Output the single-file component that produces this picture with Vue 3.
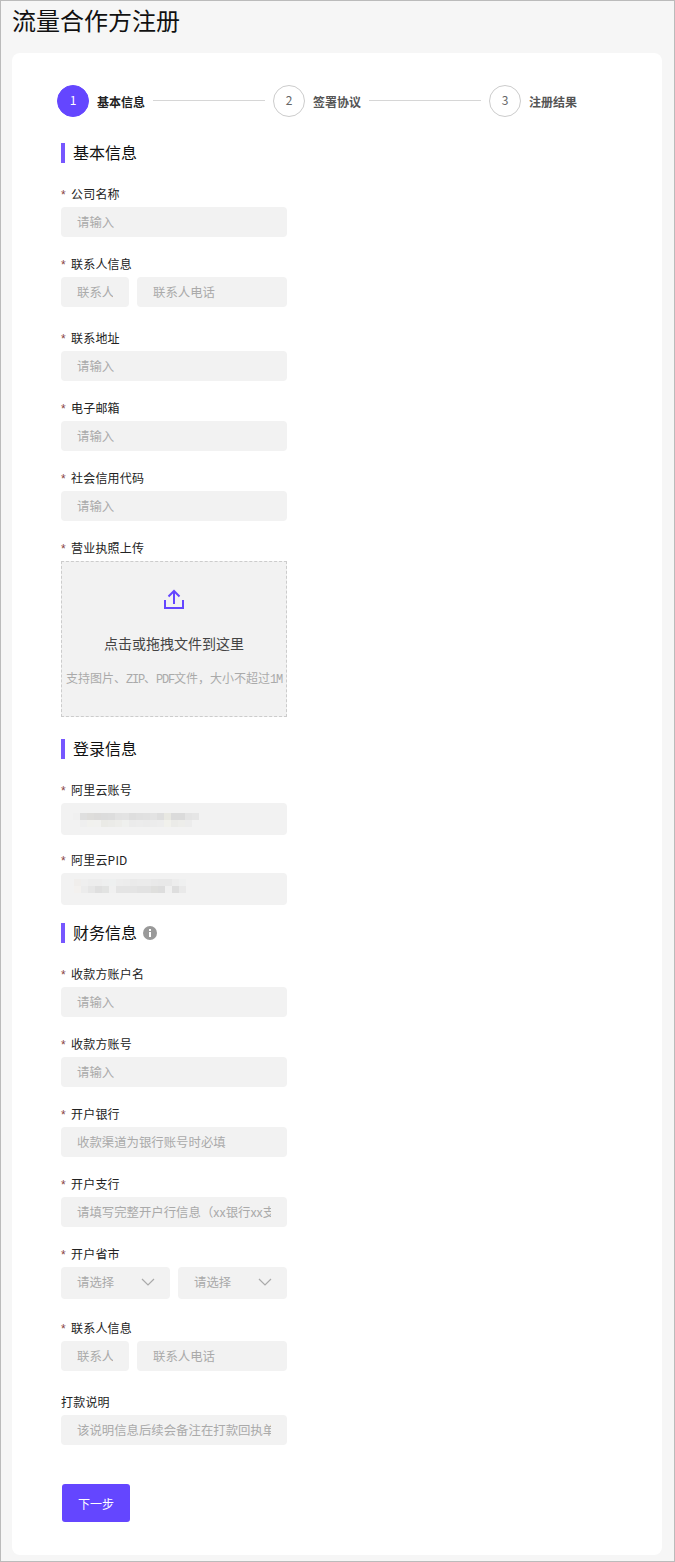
<template>
  <div class="page">
    <h1 class="title">流量合作方注册</h1>

    <div class="card">
      <!-- steps -->
      <div class="steps">
        <template v-for="(step, i) in steps" :key="step">
          <div v-if="i > 0" class="step-line"></div>
          <div class="step-num" :class="{ active: i === 0 }">{{ i + 1 }}</div>
          <div class="step-name" :class="{ active: i === 0 }">{{ step }}</div>
        </template>
      </div>

      <form class="form" @submit.prevent>
        <!-- 基本信息 -->
        <h2 class="section">基本信息</h2>
        <div class="field">
          <label class="label"><i>*</i>公司名称</label>
          <input class="input" placeholder="请输入" />
        </div>
        <div class="field loose">
          <label class="label"><i>*</i>联系人信息</label>
          <div class="pair">
            <input class="input short" placeholder="联系人" />
            <input class="input" placeholder="联系人电话" />
          </div>
        </div>
        <div class="field" v-for="name in basicFields" :key="name">
          <label class="label"><i>*</i>{{ name }}</label>
          <input class="input" placeholder="请输入" />
        </div>
        <div class="field upload-field">
          <label class="label"><i>*</i>营业执照上传</label>
          <div class="upload">
            <svg class="upload-icon" width="20" height="20" viewBox="0 0 20 20" fill="none">
              <path d="M1 11v8h18v-8M10 15V2M4.500 7.500L10 2l5.500 5.500" stroke="#6446ff" stroke-width="2" />
            </svg>
            <div class="upload-title">点击或拖拽文件到这里</div>
            <div class="upload-hint">支持图片、<span>ZIP</span>、<span>PDF</span>文件&#xFF0C;大小不超过<span>1M</span></div>
          </div>
        </div>

        <!-- 登录信息 -->
        <h2 class="section">登录信息</h2>
        <div class="field tall">
          <label class="label"><i>*</i>阿里云账号</label>
          <div class="masked">
            <div class="mosaic" :style="{ width: account[0].length * 7 + 'px' }">
              <span v-for="(c, i) in account.flat()" :key="i" :style="{ background: c }"></span>
            </div>
          </div>
        </div>
        <div class="field tall last-tall">
          <label class="label"><i>*</i>阿里云PID</label>
          <div class="masked pid">
            <div class="mosaic" :style="{ width: pid[0].length * 7 + 'px' }">
              <span v-for="(c, i) in pid.flat()" :key="i" :style="{ background: c }"></span>
            </div>
          </div>
        </div>

        <!-- 财务信息 -->
        <h2 class="section">
          财务信息
          <svg class="info" width="14" height="14" viewBox="0 0 14 14">
            <circle cx="7" cy="7" r="7" fill="#999" />
            <rect x="6" y="6" width="2" height="5" fill="#fff" />
            <rect x="6" y="3" width="2" height="2" fill="#fff" />
          </svg>
        </h2>
        <div class="field" v-for="f in financeFields" :key="f.name">
          <label class="label"><i>*</i>{{ f.name }}</label>
          <input class="input" :placeholder="f.hint" />
        </div>
        <div class="field selects">
          <label class="label"><i>*</i>开户省市</label>
          <div class="pair">
            <div class="select" v-for="n in 2" :key="n">
              <span>请选择</span>
              <svg width="14" height="8" viewBox="0 0 14 8" fill="none">
                <path d="M1 1l6 6 6-6" stroke="#aaa" stroke-width="1.200" />
              </svg>
            </div>
          </div>
        </div>
        <div class="field loose">
          <label class="label"><i>*</i>联系人信息</label>
          <div class="pair">
            <input class="input short" placeholder="联系人" />
            <input class="input" placeholder="联系人电话" />
          </div>
        </div>
        <div class="field">
          <label class="label">打款说明</label>
          <input class="input" placeholder="该说明信息后续会备注在打款回执单上" />
        </div>

        <button class="next" type="submit">下一步</button>
      </form>
    </div>
  </div>
</template>

<script setup>
const steps = ["基本信息", "签署协议", "注册结果"];
const basicFields = ["联系地址", "电子邮箱", "社会信用代码"];

const financeFields = [
  { name: "收款方账户名", hint: "请输入" },
  { name: "收款方账号", hint: "请输入" },
  { name: "开户银行", hint: "收款渠道为银行账号时必填" },
  { name: "开户支行", hint: "请填写完整开户行信息\uFF08xx银行xx支行\uFF09" },
];

// blurred-out account values
const account = [
  ["#f0f0f0", "#dfdfdf", "#dedddb", "#dcdbda", "#dcdcdc", "#dddddd", "#e2e2e2", "#e3e3e3", "#dedede", "#e0e0e0", "#e1e1e1", "#e3e3e3", "#dedede", "#e8e8e2", "#dbdbdb", "#dbdbdb", "#e4e4e4", "#e6e6e6"],
  ["#f2f2f2", "#efefef", "#f1f1ee", "#f1f1ef", "#eaeae6", "#ebebe8", "#ededea", "#eff0ee", "#ebebeb", "#ececec", "#ebebeb", "#ececec", "#ededed", "#f1f1ec", "#ebebe8", "#ededea", "#ececec", "#f2f2f2"],
];
const pid = [
  ["#f0eeec", "#efefef", "#ededed", "#ededed", "#eeefef", "#eef0f0", "#ededed", "#ececec", "#eaeaea", "#ebebeb", "#ebebeb", "#e9e9e9", "#e8e8e8", "#e8e8e8", "#ededed", "#eff0f0"],
  ["#f3f1ef", "#ececec", "#e6e6e6", "#dfdfdf", "#e2e3e2", "#f0f0f0", "#e4e4e4", "#e4e4e4", "#e4e4e4", "#e2e2e2", "#e2e2e2", "#dfdfdd", "#dddddd", "#f0f0f0", "#dedede", "#e9e9e9"],
];
</script>

<style>
html,
body {
  margin: 0;
  background: #f6f6f6;
}
</style>

<style scoped>
.page {
  box-sizing: border-box;
  min-height: 1562px;
  padding: 0 12px 6px 11px;
  border: 1px solid #bbb;
  background: #f6f6f6;
  font-family: "Noto Sans CJK SC", "Noto Sans", sans-serif;
  font-size: 12px;
  color: #222;
}

.title {
  box-sizing: border-box;
  height: 52px;
  margin: 0;
  font-size: 24px;
  line-height: 37px;
  font-weight: 400;
  color: #111;
}

.card {
  padding: 32px 45px 33px;
  border-radius: 8px;
  background: #fff;
}

/* steps */
.steps {
  display: flex;
  align-items: center;
  height: 32px;
}

.step-num {
  box-sizing: border-box;
  width: 32px;
  height: 32px;
  flex: none;
  border: 1px solid #ccc;
  border-radius: 50%;
  text-align: center;
  line-height: 28px;
  color: #666;
}

.step-num.active {
  border-color: #6446ff;
  background: #6446ff;
  color: #fff;
}

.step-name {
  margin: 1px 8px 0;
  font-weight: 700;
  color: #555;
}

.step-name.active {
  color: #222;
}

.step-line {
  width: 112px;
  height: 1px;
  margin: -1px 8px 0 0;
  background: #d6d6d6;
}

/* form */
.form {
  width: 226px;
  margin: 26px 0 0 4px;
}

.section {
  box-sizing: border-box;
  display: flex;
  align-items: center;
  gap: 6px;
  height: 20px;
  margin: 0 0 21px;
  padding: 0 0 2px 8px;
  border-left: 4px solid #7657ff;
  font-size: 16px;
  line-height: 18px;
  font-weight: 400;
  color: #111;
}

.info {
  margin-top: 2px;
}

.field {
  margin-bottom: 17px;
}

.field.loose {
  margin-bottom: 21px;
}

.field.upload-field {
  margin-bottom: 22px;
}

.field.tall {
  margin-bottom: 15px;
}

.field.last-tall {
  margin-bottom: 18px;
}

.field.selects {
  margin-bottom: 19px;
}

.label {
  display: block;
  height: 20px;
  margin-bottom: 3px;
  line-height: 20px;
  letter-spacing: 0.2px;
  color: #222;
}

.label i {
  display: inline-block;
  width: 10px;
  font-family: "Liberation Sans", sans-serif;
  font-style: normal;
  color: #844;
}

.input {
  display: block;
  box-sizing: border-box;
  width: 100%;
  min-width: 0;
  height: 30px;
  padding: 0 16px;
  border: none;
  border-radius: 4px;
  outline: none;
  background: #f2f2f2;
  font-family: inherit;
  font-size: 12.4px;
}

.input::placeholder {
  color: #aaa;
  opacity: 1;
}

.pair {
  display: flex;
  gap: 8px;
}

.input.short {
  flex: none;
  width: 68px;
}

.pair .input:not(.short) {
  flex: 1;
}

.select {
  flex: 1;
  display: flex;
  align-items: center;
  justify-content: space-between;
  box-sizing: border-box;
  height: 32px;
  padding: 0 16px 2px;
  border-radius: 4px;
  background: #f2f2f2;
  font-size: 12.4px;
  color: #aaa;
}

.select svg {
  margin-right: -1px;
}

/* upload */
.upload {
  box-sizing: border-box;
  height: 156px;
  padding-top: 27px;
  border: 1px dashed #ccc;
  background: #f2f2f2;
  text-align: center;
}

.upload-icon {
  display: block;
  margin: 0 auto;
}

.upload-title {
  margin-top: 23px;
  font-size: 14px;
  line-height: 22px;
  color: #444;
}

.upload-hint {
  margin-top: 15px;
  line-height: 18px;
  white-space: nowrap;
  color: #aaa;
}

.upload-hint span {
  font-family: "Liberation Mono", monospace;
  letter-spacing: -1.2px;
}

/* blurred values */
.masked {
  box-sizing: border-box;
  height: 32px;
  padding: 10px 0 0 12px;
  border-radius: 4px;
  background: #f2f2f2;
}

.masked.pid {
  padding: 6px 0 0 13px;
}

.mosaic {
  display: flex;
  flex-wrap: wrap;
}

.mosaic span {
  width: 7px;
  height: 7px;
}

.next {
  display: block;
  width: 68px;
  height: 38px;
  margin: 39px 0 0 1px;
  border: none;
  border-radius: 3px;
  background: #6446ff;
  font-family: inherit;
  font-size: 12px;
  color: #fff;
}
</style>
